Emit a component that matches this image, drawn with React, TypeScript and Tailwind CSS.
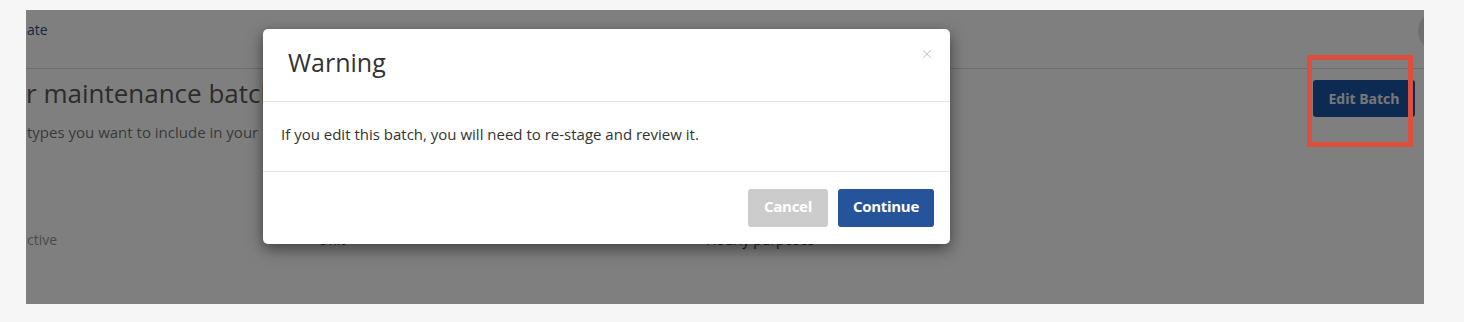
import { X } from "lucide-react";

const font = { fontFamily: "'Open Sans', Lato, sans-serif" };

function PageBehind() {
  return (
    <div className="flex h-full flex-col" style={font}>
      <div className="flex h-[59px] shrink-0 items-start justify-between border-b border-[#dddddd]">
        <span className="mt-[10px] pl-[1px] text-[14px] leading-[20px] text-[#2a4f86]">ate</span>
        <div className="mr-[-34px] mt-[1px] h-[40px] w-[40px] rounded-full bg-[#dedede]" />
      </div>
      <div className="flex items-start justify-between">
        <div>
          <h1 className="mt-[9px] text-[26px] leading-[30px] text-[#585858]">
            r maintenance batch
          </h1>
          <p className="mt-[13px] pl-[1px] text-[15px] text-[#757575]">
            types you want to include in your update
          </p>
        </div>
        <button
          type="button"
          className="mr-[9px] mt-[11px] h-[37px] w-[102px] rounded-[3px] bg-[#1a55a4] text-[14px] font-bold text-[#eeeeee]"
        >
          Edit Batch
        </button>
      </div>
      <div className="mt-[85px] flex items-center text-[14px] text-[#959595]">
        <span className="w-[292px] pl-[1px]">ctive</span>
        <span className="w-[362px] text-[#333]">Unit</span>
        <span className="mr-[20px] h-[6px] w-[6px] rounded-full bg-[#333]" />
        <span className="text-[#333]">Hourly purposes</span>
      </div>
    </div>
  );
}

function WarningModal() {
  return (
    <div
      className="absolute left-[237px] top-[19px] w-[687px] rounded-[5px] bg-white shadow-[0_5px_15px_rgba(0,0,0,0.5)]"
      style={font}
    >
      <div className="relative flex h-[73px] items-center border-b border-[#e5e5e5] pb-[6px] pl-[25px]">
        <h2 className="text-[25px] leading-none text-[#333]">Warning</h2>
        <X className="absolute right-[16px] top-[18px] h-[14px] w-[14px] text-[#c4c4c4]" strokeWidth={1.8} />
      </div>
      <div className="flex h-[70px] items-center border-b border-[#e5e5e5] pb-[4px] pl-[18px]">
        <p className="text-[15px] text-[#333]">
          If you edit this batch, you will need to re-stage and review it.
        </p>
      </div>
      <div className="flex h-[72px] items-center justify-end gap-[10px] pr-[16px]">
        <button
          type="button"
          className="h-[38px] w-[80px] rounded-[3px] bg-[#cccccc] pb-[4px] text-[15px] font-bold tracking-[-0.3px] text-white"
        >
          Cancel
        </button>
        <button
          type="button"
          className="h-[38px] w-[96px] rounded-[3px] bg-[#26549a] pb-[4px] text-[15px] font-bold tracking-[-0.3px] text-white"
        >
          Continue
        </button>
      </div>
    </div>
  );
}

export default function App() {
  return (
    <div className="h-[322px] w-[1464px] bg-[#f6f6f6] pl-[26px] pt-[10px]">
      <div className="relative h-[294px] w-[1398px] overflow-hidden bg-white">
        <PageBehind />
        <div className="absolute inset-0 bg-black/50" />
        <WarningModal />
        <div className="absolute left-[1281px] top-[45px] h-[92px] w-[106px] border-[5px] border-[#dc4f3e]" />
      </div>
    </div>
  );
}
